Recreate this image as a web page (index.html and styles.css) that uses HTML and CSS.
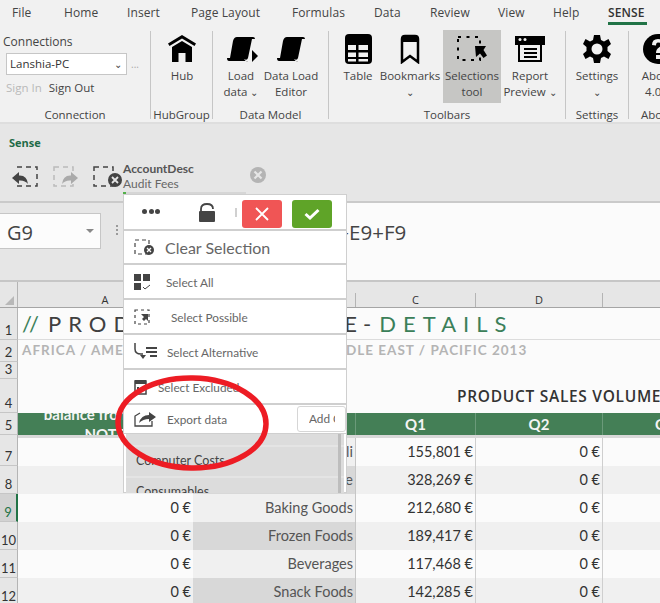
FILE: index.html
```html
<!DOCTYPE html>
<html lang="en">
  <head>
    <meta charset="UTF-8" />
    <title>Sense for Excel</title>
    <link rel="stylesheet" href="styles.css">
  </head>
  <body>
    <div class="tabs">
      <span class="tab t-file">File</span>
      <span class="tab t-home">Home</span>
      <span class="tab t-insert">Insert</span>
      <span class="tab t-page">Page Layout</span>
      <span class="tab t-form">Formulas</span>
      <span class="tab t-data">Data</span>
      <span class="tab t-review">Review</span>
      <span class="tab t-view">View</span>
      <span class="tab t-help">Help</span>
      <span class="tab t-sense">SENSE</span>
    </div>

    <div class="ribbon">
      <div class="group g-conn">
        <div class="conn">
          <div class="conn-title">Connections</div>
          <div class="conn-select">
            <div class="select-box">Lanshia-PC<span class="chev">&#8964;</span></div>
            <span class="more">...</span>
          </div>
          <div class="conn-links"><span class="muted">Sign In</span><span>Sign Out</span></div>
        </div>
        <div class="group-label">Connection</div>
      </div>

      <div class="group g-hub">
        <div class="btns">
          <div class="btn w-60">
            <svg class="ico" width="30" height="30" viewBox="0 0 30 30"><path d="M15 1 29 9.500 27.500 12 15 4.500 2.500 12 1 9.500Z"/><path d="M15 7 25 13V28H18.500V19H11.500V28H5V13Z"/></svg>
            <span>Hub</span>
          </div>
        </div>
        <div class="group-label">HubGroup</div>
      </div>

      <div class="group g-model">
        <div class="btns">
          <div class="btn w-56">
            <svg class="ico" width="34" height="30" viewBox="0 0 34 30"><path d="M13 3H29Q31 3 31 5H28L24 24Q23 27 20 25V24H6L9 7Q10 3 13 3Z"/><path d="M3 24H20Q21 28 24 27H5Q3 27 3 24Z"/><path d="M28 16 34 22 28 28Z"/></svg>
            <span>Load</span>
            <span>data <i class="chev">&#8964;</i></span>
          </div>
          <div class="btn w-58 editor">
            <svg class="ico" width="32" height="30" viewBox="0 0 32 30"><path d="M12 3H28Q30 3 30 5H27L23 24Q22 27 19 25V24H5L8 7Q9 3 12 3Z"/><path d="M2 24H19Q20 28 23 27H4Q2 27 2 24Z"/></svg>
            <span>Data Load</span>
            <span>Editor</span>
          </div>
        </div>
        <div class="group-label">Data Model</div>
      </div>

      <div class="group g-tools">
        <div class="btns">
          <div class="btn b-table">
            <svg class="ico" width="28" height="30" viewBox="0 0 28 30"><rect x="1" width="27" height="30" rx="4"/><path fill="#f1f1f1" d="M4 11H12V16H4ZM14.500 11H24V16H14.500ZM4 18.500H12V23H4ZM14.500 18.500H24V23H14.500ZM4 25H12V27.500H4ZM14.500 25H24V27.500H14.500Z"/></svg>
            <span>Table</span>
          </div>
          <div class="btn b-marks">
            <svg class="ico" width="20" height="30" viewBox="0 0 20 30"><path fill="none" stroke="#000" stroke-width="2.500" d="M2 28V5Q2 2 5 2H15Q18 2 18 5V28L10 22Z"/><path d="M2 3H18V8H2Z"/></svg>
            <span>Bookmarks</span>
            <span><i class="chev">&#8964;</i></span>
          </div>
          <div class="btn w-58 active">
            <svg class="ico" width="32" height="30" viewBox="0 0 32 30"><path fill="none" stroke="#000" stroke-width="2" stroke-dasharray="3 5.500" d="M2 3H24V26H2Z"/><path d="M19 12H30L27.500 16 31 21.500 27.500 24 24 19.500 20 23Z"/></svg>
            <span>Selections</span>
            <span>tool</span>
          </div>
          <div class="btn w-58">
            <svg class="ico" width="32" height="30" viewBox="0 0 32 30"><path d="M1 2H31V11H28V28H4V11H1Z"/><path fill="#f1f1f1" d="M6 11H26V26H6Z"/><path d="M10 14H23V16H10ZM10 18H23V20H10ZM10 22H23V24H10Z"/><circle cx="6" cy="5.500" r="1.500" fill="#f1f1f1"/><circle cx="11" cy="5.500" r="1.500" fill="#f1f1f1"/></svg>
            <span>Report</span>
            <span>Preview <i class="chev">&#8964;</i></span>
          </div>
        </div>
        <div class="group-label">Toolbars</div>
      </div>

      <div class="group g-settings">
        <div class="btns">
          <div class="btn w-62">
            <svg class="ico" width="28" height="30" viewBox="0 0 28 30"><path fill-rule="evenodd" d="M11 1H17L18 6 21 7.500 25.500 5 28 10 24.500 13V17L28 20 25.500 25 21 22.500 18 24 17 29H11L10 24 7 22.500 2.500 25 0 20 3.500 17V13L0 10 2.500 5 7 7.500 10 6ZM14 9.500A5.500 5.500 0 1 0 14 20.500 5.500 5.500 0 1 0 14 9.500Z"/></svg>
            <span>Settings</span>
            <span><i class="chev">&#8964;</i></span>
          </div>
        </div>
        <div class="group-label">Settings</div>
      </div>

      <div class="group g-about">
        <div class="btns">
          <div class="btn b-about">
            <svg class="ico" width="30" height="30" viewBox="0 0 30 30"><circle cx="15" cy="15" r="15"/><path fill="#f1f1f1" d="M9 11Q9 5 15 5 22 5 22 10.500 22 14 18.500 16 17 17 17 19H13Q13 15 16 13.500 18 12.500 18 10.500 18 8.500 15 8.500 13 8.500 13 11.500ZM13 21H17V25H13Z"/></svg>
            <span>About</span>
            <span>4.0.1</span>
          </div>
        </div>
        <div class="group-label about-label">About</div>
      </div>
    </div>

    <div class="sense">
      <div class="sense-title">Sense</div>
      <div class="sel-bar">
        <svg class="sel-ico" width="28" height="24" viewBox="0 0 28 24"><path fill="none" stroke="#444" stroke-width="1.500" stroke-dasharray="5 4" d="M5 2H25V21H5"/><path fill="#444" d="M0 13 7 7V10.500Q15 10 16 19 13 15 7 15.500V19Z"/></svg>
        <svg class="sel-ico off" width="28" height="24" viewBox="0 0 28 24"><path fill="none" stroke="#bbb" stroke-width="1.500" stroke-dasharray="5 4" d="M2 2H21V21H2Z"/><path fill="#aaa" d="M26 13 19 7V10.500Q11 10 10 19 13 15 19 15.500V19Z"/></svg>
        <svg class="sel-ico clr" width="30" height="24" viewBox="0 0 30 24"><path fill="none" stroke="#444" stroke-width="1.500" stroke-dasharray="5 4" d="M1 2H20V21H1Z"/><circle cx="22" cy="15" r="7" fill="#444"/><path stroke="#e6e6e6" stroke-width="1.800" d="M19 12 25 18M25 12 19 18"/></svg>
        <div class="sel-text"><b>AccountDesc</b><span>Audit Fees</span></div>
        <svg class="sel-x" width="16" height="16" viewBox="0 0 16 16"><circle cx="8" cy="8" r="8" fill="#b4b4b4"/><path stroke="#e6e6e6" stroke-width="2.200" d="M4.500 4.500 11.500 11.500M11.500 4.500 4.500 11.500"/></svg>
      </div>
      <div class="formula">
        <div class="namebox">G9<i class="caret"></i></div>
        <div class="fx-dots"></div>
        <div class="fx-input">=B9+C9+D9+E9+F9</div>
      </div>
    </div>

    <div class="sheet">
      <div class="row heads">
        <div class="rh corner"><i></i></div>
        <div class="ch">A</div><div class="ch">B</div><div class="ch">C</div><div class="ch">D</div><div class="ch">E</div>
      </div>
      <div class="row r1">
        <div class="rh">1</div>
        <div class="wide title"><em class="slash">//</em><span class="name">PRODUCT PROFILE</span><span class="dash">-</span><em>DETAILS</em></div>
      </div>
      <div class="row r2">
        <div class="rh">2</div>
        <div class="wide sub">AFRICA / AMERICAS / ASIA / EUROPE /&nbsp;&nbsp; MIDDLE EAST / PACIFIC 2013</div>
      </div>
      <div class="row r3"><div class="rh">3</div></div>
      <div class="row r4">
        <div class="rh">4</div>
        <div class="volume">PRODUCT SALES VOLUME</div>
      </div>
      <div class="row r5">
        <div class="rh">5</div>
        <div class="gh gh-a"><div>balance from prior<br>NOTE</div></div>
        <div class="gh"></div>
        <div class="gh">Q1</div><div class="gh">Q2</div><div class="gh">Q3</div>
      </div>
      <div class="row r6"><div class="rh"></div></div>
      <div class="row data">
        <div class="rh">7</div><div class="c">0 €</div><div class="c b">Deli</div><div class="c n">155,801 €</div><div class="c n">0 €</div><div class="c"></div>
      </div>
      <div class="row data alt">
        <div class="rh">8</div><div class="c">0 €</div><div class="c b">Produce</div><div class="c n">328,269 €</div><div class="c n">0 €</div><div class="c"></div>
      </div>
      <div class="row data cur">
        <div class="rh">9</div><div class="c">0 €</div><div class="c b">Baking Goods</div><div class="c n">212,680 €</div><div class="c n">0 €</div><div class="c"></div>
      </div>
      <div class="row data alt">
        <div class="rh">10</div><div class="c">0 €</div><div class="c b">Frozen Foods</div><div class="c n">189,417 €</div><div class="c n">0 €</div><div class="c"></div>
      </div>
      <div class="row data">
        <div class="rh">11</div><div class="c">0 €</div><div class="c b">Beverages</div><div class="c n">117,468 €</div><div class="c n">0 €</div><div class="c"></div>
      </div>
      <div class="row data alt">
        <div class="rh">12</div><div class="c">0 €</div><div class="c b">Snack Foods</div><div class="c n">142,285 €</div><div class="c n">0 €</div><div class="c"></div>
      </div>
    </div>

    <div class="popup">
      <div class="popup-bar"></div>
      <div class="pop-head">
        <span class="dots"><i></i><i></i><i></i></span>
        <svg class="lock" width="16" height="19" viewBox="0 0 16 19"><path fill="none" stroke="#444" stroke-width="1.800" d="M2 9V6Q2 1 8 1 14 1 14 6"/><rect y="8" width="16" height="11" rx="1" fill="#444"/></svg>
        <i class="pipe"></i>
        <span class="pbtn cancel"><svg width="14" height="14" viewBox="0 0 14 14"><path stroke="#fff" stroke-width="1.800" d="M1 1 13 13M13 1 1 13"/></svg></span>
        <span class="pbtn ok"><svg width="16" height="12" viewBox="0 0 16 12"><path fill="none" stroke="#fff" stroke-width="3" d="M1.500 6 6 10 14.500 2"/></svg></span>
      </div>
      <div class="pop-row clear">
        <svg width="20" height="16" viewBox="0 0 20 16"><path fill="none" stroke="#444" stroke-width="1.200" stroke-dasharray="4 3" d="M1 1H15V15H1Z"/><circle cx="15" cy="11" r="5" fill="#444"/><path stroke="#fff" stroke-width="1.300" d="M13 9 17 13M17 9 13 13"/></svg>
        <span>Clear Selection</span>
      </div>
      <div class="pop-row p-all">
        <svg width="16" height="16" viewBox="0 0 16 16"><path fill="#444" d="M0 0H7V7H0ZM9 0H16V7H9ZM0 9H7V16H0Z"/><path fill="none" stroke="#444" d="M9 13 11 15 16 11"/></svg>
        <span>Select All</span>
      </div>
      <div class="pop-row p-poss">
        <svg width="17" height="16" viewBox="0 0 17 16"><path fill="none" stroke="#444" stroke-width="1.200" stroke-dasharray="3 3" d="M1 1H15V15H1Z"/><path fill="#444" d="M7 5H14V12L12 10 10 12 8 10 10 8Z"/></svg>
        <span>Select Possible</span>
      </div>
      <div class="pop-row p-alt">
        <svg width="24" height="17" viewBox="0 0 24 17"><path fill="none" stroke="#444" stroke-width="1.500" d="M1 0V6Q1 11 7 11H9"/><path fill="#444" d="M9 16 6 12 12 12ZM12 4H23V6H12ZM12 8H23V10H12ZM16 12H23V14H16Z"/></svg>
        <span>Select Alternative</span>
      </div>
      <div class="pop-row p-exc">
        <svg width="13" height="16" viewBox="0 0 13 16"><path fill="none" stroke="#444" stroke-width="1.500" d="M1 2H12V15H1Z"/><path fill="#444" d="M1 1H12V5H1ZM3 8H5V10H3ZM7 8H9V10H7Z"/></svg>
        <span>Select Excluded</span>
      </div>
      <div class="pop-row p-exp">
        <svg width="22" height="15" viewBox="0 0 22 15"><path fill="none" stroke="#444" stroke-width="1.300" d="M18 9V14H1V4L6 1"/><path fill="#444" d="M22 5 15 0V3Q7 3 5 11 9 7 15 7V10Z"/></svg>
        <span>Export data</span>
        <div class="add-btn"><span>Add Current</span></div>
      </div>
      <div class="pop-list">
        <div class="li li-top"></div>
        <div class="li">Computer Costs</div>
        <div class="li">Consumables</div>
        <i class="scroll"></i>
      </div>
    </div>

    <svg class="mark" width="162" height="104" viewBox="0 0 162 104"><ellipse cx="80" cy="52" rx="74" ry="45" fill="none" stroke="#ed1c24" stroke-width="5.500" transform="rotate(1 80 52)"/></svg>
  </body>
</html>
```

FILE: styles.css
```css
html,
body {
  margin: 0;
  width: 660px;
  height: 603px;
  overflow: hidden;
  background-color: #e6e6e6;
  font-family: "Open Sans", sans-serif;
  color: #444;
}

/* ribbon */
.tabs {
  display: flex;
  height: 25px;
  background-color: #f1f1f1;
  font-size: 12px;
  letter-spacing: 0.1px;
}
.tab {
  display: block;
  padding-top: 4px;
  box-sizing: border-box;
  height: 25px;
  white-space: nowrap;
}
.t-file { margin-left: 12px; width: 52px; }
.t-home { width: 63px; }
.t-insert { width: 64px; }
.t-page { width: 101px; }
.t-form { width: 82px; }
.t-data { width: 56px; }
.t-review { width: 68px; }
.t-view { width: 55px; }
.t-help { width: 55px; }
.t-sense {
  width: 39px;
  font-weight: 600;
  color: #333;
  border-bottom: 3px solid #217346;
}

.ribbon {
  display: flex;
  height: 99px;
  overflow: hidden;
  box-sizing: border-box;
  background-color: #f1f1f1;
  border-bottom: 2px solid #dedede;
  font-size: 11.500px;
  line-height: 16px;
}
.group {
  position: relative;
  display: flex;
  flex-direction: column;
  flex: none;
  height: 88px;
  margin-top: 6px;
  border-right: 1px solid #c6c6c6;
  box-sizing: border-box;
}
.g-conn { width: 151px; }
.g-hub { width: 62px; }
.g-model { width: 116px; }
.g-tools { width: 237px; }
.g-settings { width: 63px; }
.g-about { width: 60px; border-right: 0; }

.group-label {
  margin-top: auto;
  text-align: center;
  font-size: 11.500px;
  line-height: 14px;
  margin-bottom: -3px;
  white-space: nowrap;
}
.about-label {
  text-align: left;
  padding-left: 12px;
}
.conn {
  padding: 3px 0 0 3px;
}
.conn-title {
  font-size: 12px;
}
.conn-select {
  display: flex;
  align-items: center;
  margin: 3px 0 0 3px;
}
.select-box {
  display: flex;
  justify-content: space-between;
  width: 121px;
  height: 22px;
  box-sizing: border-box;
  padding: 2px 4px 0 3px;
  background-color: #fff;
  border: 1px solid #c6c6c6;
  color: #333;
}
.more {
  margin: 0 0 0 4px;
  color: #aaa;
  font-size: 10px;
}
.chev {
  font-style: normal;
  font-size: 10px;
  color: #444;
}
.conn-links {
  display: flex;
  gap: 7px;
  margin: 5px 0 0 3px;
}
.muted {
  color: #b9b9b9;
}

.btns {
  display: flex;
}
.btn {
  display: flex;
  flex-direction: column;
  align-items: center;
  flex: none;
  box-sizing: border-box;
  height: 73px;
  margin-top: -1px;
  padding-top: 4px;
  white-space: nowrap;
  text-align: center;
}
.btn .ico {
  flex: none;
  margin-bottom: 4px;
  fill: #000;
}
.btn span {
  display: block;
  height: 16px;
}
.w-56 { width: 56px; }
.w-58 { width: 58px; }
.w-60 { width: 60px; margin-left: 1px; }
.w-62 { width: 62px; }
.editor { margin-left: -7px; }
.b-table { width: 52px; margin-left: 3px; }
.b-marks { width: 52px; margin-right: 7px; }
.b-about { width: 58px; }
.active { background-color: #c6c6c4; }

/* sense pane */
.sense {
  height: 158px;
  background-color: #e6e6e6;
}
.sense-title {
  padding: 11px 0 0 9px;
  height: 29px;
  box-sizing: border-box;
  font-size: 11px;
  font-weight: 700;
  color: #1f6b48;
}
.sel-bar {
  display: flex;
  align-items: center;
  height: 50px;
  box-sizing: border-box;
  padding: 0 0 0 12px;
  border-bottom: 2px solid #cacaca;
}
.sel-ico { flex: none; }
.sel-ico.off { margin-left: 12px; }
.sel-ico.clr { margin-left: 13px; }
.sel-text {
  display: flex;
  flex-direction: column;
  width: 127px;
  margin: -2px 0 0 0;
  font-family: "Lato", sans-serif;
  font-size: 12px;
  line-height: 15px;
  color: #666;
}
.sel-text b { color: #555; }
.sel-x { margin-top: -4px; }

.formula {
  display: flex;
  height: 79px;
  border-bottom: 2px solid #c6c6c6;
  box-sizing: border-box;
}
.namebox {
  position: relative;
  width: 101px;
  height: 36px;
  margin-top: 10px;
  box-sizing: border-box;
  padding: 5px 0 0 7px;
  background-color: #fcfcfc;
  border: 1px solid #c6c6c6;
  border-left: 0;
  font-size: 20px;
  line-height: 27px;
  color: #444;
}
.caret {
  position: absolute;
  right: 6px;
  top: 15px;
  border: 4px solid transparent;
  border-top: 4px solid #888;
}
.fx-dots {
  width: 2px;
  height: 10px;
  margin: 22px 0 0 15px;
  background-image: linear-gradient(#9a9a9a 2px, transparent 2px);
  background-size: 2px 4px;
}
.fx-input {
  flex: 1;
  margin-left: 6px;
  padding: 16px 0 0 102px;
  background-color: #fbfbfb;
  font-size: 20.500px;
  line-height: 27px;
  color: #444;
  white-space: nowrap;
}

/* sheet */
.sheet {
  overflow: hidden;
  background-color: #fbfbfb;
}
.row {
  display: grid;
  grid-template-columns: 18px 175px 163px 120px 127px 125px;
  box-sizing: border-box;
}
.rh {
  display: flex;
  align-items: flex-end;
  justify-content: center;
  box-sizing: border-box;
  padding-bottom: 1px;
  background-color: #e6e6e6;
  border-right: 1px solid #b4b4b4;
  border-bottom: 1px solid #c6c6c6;
  font-family: "Lato", sans-serif;
  font-size: 13px;
  line-height: 15px;
  color: #333;
}
.heads { height: 26px; border-bottom: 1px solid #a5a5a5; background-color: #e6e6e6; }
.corner { position: relative; border-bottom: 0; }
.corner i {
  position: absolute;
  right: 3px;
  bottom: 2px;
  border-style: solid;
  border-width: 0 0 9px 9px;
  border-color: transparent transparent #b8b8b8 transparent;
}
.ch {
  display: flex;
  align-items: flex-end;
  justify-content: center;
  border-right: 1px solid #b4b4b4;
  margin-top: 11px;
  font-size: 11px;
  line-height: 14px;
  color: #333;
}
.r1 { height: 32px; border-bottom: 1px solid #dcdcdc; }
.r2 { height: 22px; }
.r3 { height: 17px; }
.r4 { height: 34px; }
.r5 { height: 22px; background-color: #447f56; }
.r6 { height: 3px; background-color: #d8d8d8; }
.r6 .rh { border-bottom: 0; }
.wide {
  grid-column: 2 / 7;
  white-space: nowrap;
  font-family: "Lato", sans-serif;
  padding-left: 4px;
}
.title {
  font-size: 22px;
  line-height: 32px;
  letter-spacing: 7px;
  color: #404040;
}
.title em {
  font-style: normal;
  color: #3b8059;
}
.title .slash {
  letter-spacing: 2px;
  margin-right: 7px;
}
.title .name {
  word-spacing: 14px;
}
.title .dash {
  margin: 0 1px 0 -1px;
}
.sub {
  font-size: 13.500px;
  line-height: 21px;
  font-weight: 700;
  letter-spacing: 1px;
  color: #b4b4b4;
}
.volume {
  grid-column: 4 / 7;
  padding: 7px 0 0 101px;
  white-space: nowrap;
  font-size: 15.500px;
  font-weight: 600;
  letter-spacing: 0.700px;
  line-height: 20px;
  color: #333;
}
.gh {
  overflow: hidden;
  text-align: center;
  font-family: "Lato", sans-serif;
  font-size: 15px;
  font-weight: 700;
  line-height: 22px;
  color: #f4f4f4;
  border-right: 1px solid #6b9a7a;
}
.gh-a {
  white-space: nowrap;
  line-height: 20px;
}
.gh-a div {
  margin-top: -9px;
}
.r5 .gh:last-child { border-right: 0; }
.data { height: 28px; }
.c {
  box-sizing: border-box;
  padding: 3px 2px 0 0;
  text-align: right;
  font-family: "Lato", sans-serif;
  font-size: 14.500px;
  line-height: 22px;
  color: #333;
}
.c.b {
  background-color: #f0f0f0;
  border-right: 1px solid #c6c6c6;
  color: #555;
}
.c.n { border-right: 1px solid #cfcfcf; }
.alt { background-color: #f0f0f0; }
.alt .c.b { background-color: #d8d8d8; }
.cur .rh {
  background-color: #d2d2d2;
  border-right: 2px solid #217346;
  color: #217346;
}

/* popup over the sheet */
.popup {
  position: absolute;
  left: 123px;
  top: 194px;
  width: 224px;
  height: 299px;
  box-sizing: border-box;
  background-color: #fff;
  border: 1px solid #cfcfcf;
  font-family: "Lato", sans-serif;
  color: #666;
}
.popup-bar {
  position: absolute;
  left: -1px;
  top: -3px;
  width: 120px;
  height: 2px;
  background-color: #d6d6d6;
  border-left: 3px solid #52b04a;
}
.pop-head {
  position: relative;
  height: 36px;
  box-sizing: border-box;
  border-bottom: 2px solid #cfcfcf;
}
.dots {
  position: absolute;
  left: 18px;
  top: 14px;
  display: flex;
  gap: 1.500px;
}
.dots i {
  width: 5px;
  height: 5px;
  border-radius: 50%;
  background-color: #444;
}
.lock {
  position: absolute;
  left: 75px;
  top: 8px;
}
.pipe {
  position: absolute;
  left: 111px;
  top: 13px;
  width: 2px;
  height: 9px;
  background-color: #d0d0d0;
}
.pbtn {
  position: absolute;
  top: 5px;
  display: flex;
  align-items: center;
  justify-content: center;
  width: 40px;
  height: 28px;
  border-radius: 3px;
}
.cancel { left: 118px; background-color: #f05555; }
.ok { left: 168px; background-color: #5fa428; }
.pop-row {
  display: flex;
  align-items: center;
  position: relative;
  height: 35px;
  box-sizing: border-box;
  padding-left: 10px;
  border-bottom: 2px solid #cfcfcf;
  font-size: 11.800px;
}
.pop-row span { padding-top: 2px; }
.pop-row svg { flex: none; }
.clear { font-size: 16px; height: 34px; }
.clear span { margin-left: 11px; padding-top: 0; }
.p-all span { margin-left: 16px; }
.p-poss span { margin-left: 20px; }
.p-alt span { margin-left: 9px; }
.p-exc span { margin-left: 11px; }
.p-exp {
  height: 29px;
  border-bottom: 1px solid #cfcfcf;
}
.p-exp span { margin-left: 11px; padding-top: 0; }
.add-btn {
  position: absolute;
  right: 0;
  top: 1px;
  width: 49px;
  height: 26px;
  box-sizing: border-box;
  padding-left: 11px;
  border: 1px solid #d6d6d6;
  border-radius: 3px;
  line-height: 24px;
  white-space: nowrap;
}
.add-btn span {
  display: block;
  width: 26px;
  margin: 0;
  overflow: hidden;
}
.pop-list {
  position: relative;
  height: 59px;
  overflow: hidden;
  margin: 0 2px;
  background-color: #dcdcdc;
  color: #444;
  font-size: 12.500px;
}
.li {
  height: 31px;
  box-sizing: border-box;
  padding: 6px 0 0 10px;
  line-height: 16px;
  border-bottom: 2px solid #e4e4e4;
}
.li-top {
  height: 13px;
  padding: 0;
}
.scroll {
  position: absolute;
  right: 3px;
  top: 0;
  width: 3px;
  height: 59px;
  background-color: #bdbdbd;
}

.mark {
  position: absolute;
  left: 112px;
  top: 371px;
}
```
